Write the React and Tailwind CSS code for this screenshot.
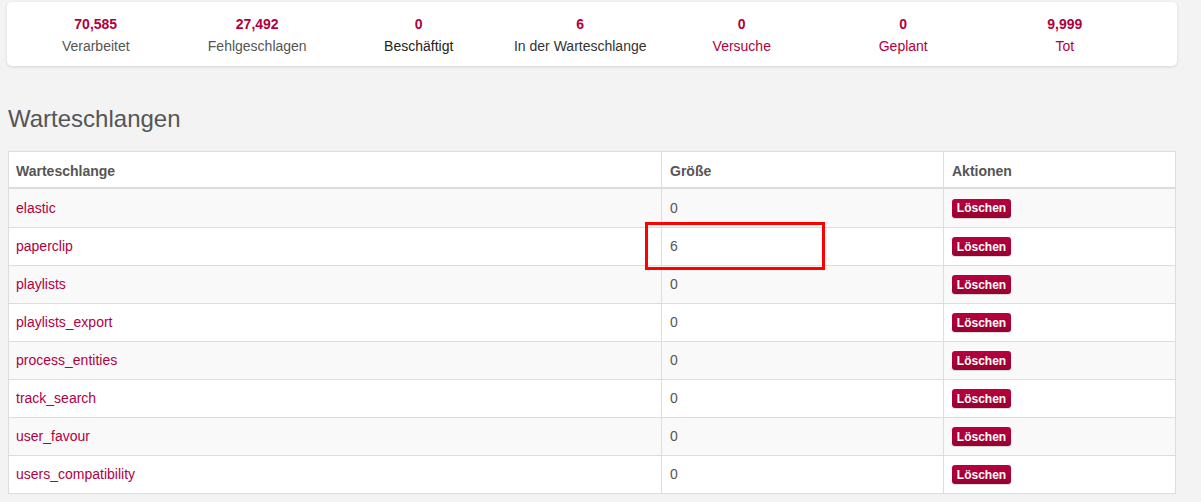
import React from "react";

const stats = [
  { n: "70,585", l: "Verarbeitet", c: "text-[#555]" },
  { n: "27,492", l: "Fehlgeschlagen", c: "text-[#555]" },
  { n: "0", l: "Beschäftigt", c: "text-[#222]" },
  { n: "6", l: "In der Warteschlange", c: "text-[#333]" },
  { n: "0", l: "Versuche", c: "text-[#b1003e]" },
  { n: "0", l: "Geplant", c: "text-[#b1003e]" },
  { n: "9,999", l: "Tot", c: "text-[#b1003e]" },
];

const queues = [
  ["elastic", "0"],
  ["paperclip", "6"],
  ["playlists", "0"],
  ["playlists_export", "0"],
  ["process_entities", "0"],
  ["track_search", "0"],
  ["user_favour", "0"],
  ["users_compatibility", "0"],
];

export default function App() {
  return (
    <div
      className="relative w-[1201px] h-[502px] overflow-hidden bg-[#f3f3f3] text-[14px] text-[#555]"
      style={{ fontFamily: '"Liberation Sans", Arial, sans-serif' }}
    >
      <div className="pt-[2px] pl-[7px] w-[1177px]">
        <div className="h-[64px] bg-white rounded-[5px] shadow-[0_1px_3px_rgba(0,0,0,0.12)] flex pl-[8px]">
          {stats.map((s) => (
            <div key={s.l} className="w-[161.5px] flex flex-col items-center pt-[12px]">
              <div className="font-bold text-[#b1003e] leading-[20px] text-[14px]">{s.n}</div>
              <div className={`${s.c} leading-[20px] mt-[2px] text-[14px]`}>{s.l}</div>
            </div>
          ))}
        </div>
      </div>

      <h3 className="ml-[8px] mt-[39px] text-[24px] font-normal leading-[28px] text-[#555]">
        Warteschlangen
      </h3>

      <div className="ml-[8px] mt-[18px] w-[1168px] border border-[#ddd] bg-white">
        <div className="grid grid-cols-[652px_282px_1fr] h-[37px] border-b-2 border-[#ddd] font-bold text-[14px] text-[#555]">
          <div className="flex items-center pt-[3px] px-[7px]">Warteschlange</div>
          <div className="flex items-center pt-[3px] px-[8px] border-l border-[#ddd]">Größe</div>
          <div className="flex items-center pt-[3px] px-[8px] border-l border-[#ddd]">Aktionen</div>
        </div>
        {queues.map(([name, size], i) => (
          <div
            key={name}
            className={`grid grid-cols-[652px_282px_1fr] h-[38px] ${i > 0 ? "border-t border-[#ddd]" : ""} ${
              i % 2 === 0 ? "bg-[#f9f9f9]" : "bg-white"
            }`}
          >
            <div className="flex items-center px-[7px] text-[#b1003e]">{name}</div>
            <div className="flex items-center px-[8px] border-l border-[#ddd] text-[#555]">{size}</div>
            <div className="flex items-center px-[8px] border-l border-[#ddd]">
              <span className="inline-flex items-center justify-center w-[59px] h-[19px] rounded-[3px] bg-gradient-to-b from-[#b8003f] to-[#98002f] text-white font-bold text-[12px] shadow-[0_1px_1px_rgba(0,0,0,0.15)]">
                Löschen
              </span>
            </div>
          </div>
        ))}
      </div>

      <div className="absolute left-[645px] top-[222px] w-[180px] h-[48px] border-[3px] border-[#ff0000]" />
    </div>
  );
}
